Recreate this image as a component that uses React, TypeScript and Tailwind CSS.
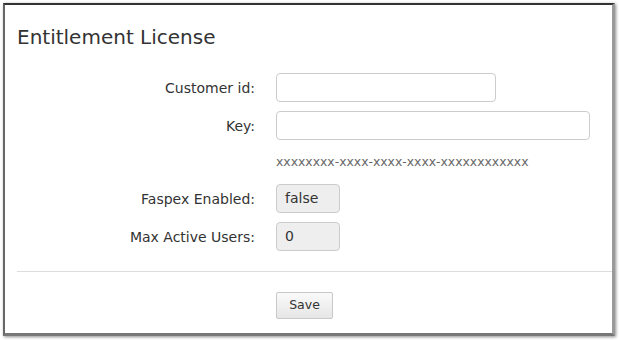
import React from "react";

const font = { fontFamily: '"DejaVu Sans", Verdana, sans-serif' };

export default function App() {
  return (
    <div className="w-[619px] h-[340px] bg-white pt-[3px] pl-[3px]" style={font}>
      <div className="w-[612px] h-[333px] bg-white border-t-2 border-l-2 border-t-[#333] border-l-[#666] border-r-[3px] border-b-[3px] border-r-[#9a9a9a] border-b-[#777] shadow-[1px_1px_3px_rgba(0,0,0,0.45)] flex flex-col">
        <div className="pl-[12px] pt-[20px] h-[68px] text-[20px] leading-[24px] text-[#333]">Entitlement License</div>
        <div className="flex flex-col text-[14px] text-[#333]">
          <div className="flex items-center h-[29px]">
            <div className="w-[250px] text-right pt-[2px]">Customer id:</div>
            <input className="ml-[21px] w-[220px] h-[29px] border border-[#ccc] rounded-[4px] bg-white" />
          </div>
          <div className="flex items-center h-[29px] mt-[9px]">
            <div className="w-[250px] text-right pt-[2px]">Key:</div>
            <input className="ml-[21px] w-[314px] h-[29px] border border-[#ccc] rounded-[4px] bg-white" />
          </div>
          <div className="flex items-center h-[20px] mt-[12px]">
            <div className="ml-[271px] text-[12.4px] text-[#666]">xxxxxxxx-xxxx-xxxx-xxxx-xxxxxxxxxxxx</div>
          </div>
          <div className="flex items-center h-[29px] mt-[12px]">
            <div className="w-[250px] text-right pt-[1px]">Faspex Enabled:</div>
            <div className="ml-[21px] w-[64px] h-[29px] border border-[#ccc] rounded-[4px] bg-[#eee] flex items-center pl-[8px]">false</div>
          </div>
          <div className="flex items-center h-[29px] mt-[9px]">
            <div className="w-[250px] text-right pt-[1px]">Max Active Users:</div>
            <div className="ml-[21px] w-[64px] h-[29px] border border-[#ccc] rounded-[4px] bg-[#eee] flex items-center pl-[8px]">0</div>
          </div>
        </div>
        <div className="ml-[12px] mt-[20px] border-t border-[#ddd]" />
        <div className="mt-[20px] ml-[271px]">
          <button className="w-[57px] h-[27px] border border-[#c8c8c8] rounded-[2px] bg-gradient-to-b from-[#fafafa] to-[#e6e6e6] text-[12.5px] text-[#333]">Save</button>
        </div>
      </div>
    </div>
  );
}
